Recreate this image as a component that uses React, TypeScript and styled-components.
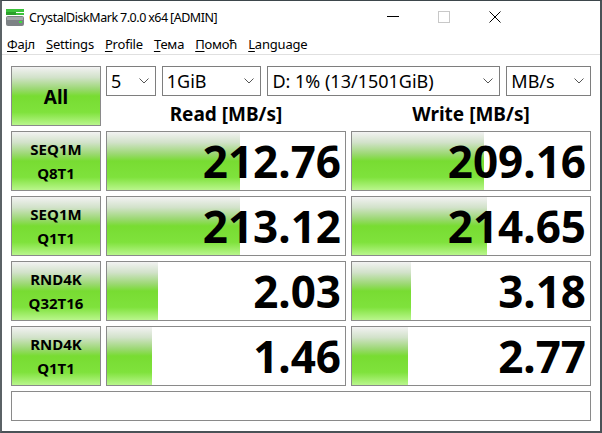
import React from "react";
import styled, { createGlobalStyle } from "styled-components";

const GlobalStyle = createGlobalStyle`
  html, body {
    margin: 0;
    padding: 0;
    background: #ffffff;
  }
  body {
    font-family: "Noto Sans", "Open Sans", sans-serif;
    color: #000;
  }
`;

const green = `linear-gradient(
  to bottom,
  #f2f2f2 0%,
  #d2e2ca 18%,
  #9bd872 38%,
  #78dc32 50%,
  #7fe23c 78%,
  #b9f68c 100%
)`;

const Window = styled.div`
  width: 602px;
  height: 433px;
  box-sizing: border-box;
  border-left: 2px solid #5b6266;
  border-right: 2px solid #4a5257;
  border-bottom: 2px solid #4a5257;
  border-top: 1px solid #3d464b;
  background: #fff;
  display: flex;
  flex-direction: column;
  overflow: hidden;
`;

const TitleBar = styled.div`
  height: 31px;
  display: flex;
  align-items: center;
  padding-left: 2px;
`;

const TitleText = styled.span`
  font-size: 12.5px;
  margin-left: 3px;
  letter-spacing: -0.45px;
  word-spacing: -0.5px;
  flex: 1;
  padding-top: 2px;
`;

const Controls = styled.div`
  display: flex;
  align-items: center;
  height: 100%;
  margin-right: 80px;
`;

const ControlButton = styled.div`
  width: 51px;
  height: 100%;
  display: flex;
  align-items: center;
  justify-content: center;
`;

const MenuBar = styled.div`
  height: 23px;
  display: flex;
  align-items: center;
  padding: 2px 0 0 5px;
  box-sizing: border-box;
  gap: 11px;
  border-bottom: 1px solid #e0e0e0;
`;

const MenuItem = styled.span`
  font-size: 13px;
  letter-spacing: -0.2px;
  u {
    text-decoration-thickness: 1px;
    text-underline-offset: 2px;
  }
`;

const Content = styled.div`
  flex: 1;
  padding: 11px 0 0 9px;
  display: grid;
  grid-template-columns: 90px 240px 240px;
  grid-template-rows: 60px 60px 60px 60px 60px 30px;
  column-gap: 5px;
  row-gap: 5px;
`;

const LabelButton = styled.div<{ $big?: boolean }>`
  box-sizing: border-box;
  border: 1px solid #8a8a8a;
  background: ${green};
  display: flex;
  flex-direction: column;
  align-items: center;
  justify-content: center;
  font-weight: 700;
  font-size: ${(p) => (p.$big ? "19px" : "15px")};
  line-height: ${(p) => (p.$big ? "20px" : "24px")};
  padding-top: ${(p) => (p.$big ? "2px" : "0")};
`;

const TopArea = styled.div`
  grid-column: 2 / span 2;
  display: grid;
  grid-template-columns: 240px 240px;
  grid-template-rows: 30px 30px;
  column-gap: 5px;
`;

const ComboRow = styled.div`
  grid-column: 1 / span 2;
  display: flex;
  gap: 6px;
`;

const Combo = styled.div<{ $w: number }>`
  width: ${(p) => p.$w}px;
  box-sizing: border-box;
  border: 1px solid #7e7e7e;
  background: #fff;
  display: flex;
  align-items: center;
  padding: 0 6px 0 4px;
  font-size: 18px;
  justify-content: space-between;
`;

const Header = styled.div`
  display: flex;
  align-items: center;
  justify-content: center;
  font-weight: 700;
  font-size: 19px;
  padding-top: 5px;
`;

const ResultBox = styled.div`
  position: relative;
  box-sizing: border-box;
  border: 1px solid #8a8a8a;
  background: #fff;
  display: flex;
  align-items: center;
  justify-content: flex-end;
  overflow: hidden;
`;

const Bar = styled.div`
  position: absolute;
  left: 0;
  top: 0;
  bottom: 0;
  background: ${green};
`;

const Value = styled.span`
  position: relative;
  font-weight: 700;
  font-size: 44px;
  line-height: 1;
  padding-right: 4px;
`;

const StatusBox = styled.div`
  grid-column: 1 / span 3;
  box-sizing: border-box;
  border: 1px solid #8a8a8a;
  background: #fff;
`;

const Chevron = () => (
  <svg width="10" height="6" viewBox="0 0 10 6">
    <polyline points="0.5,0.5 5,5 9.5,0.5" fill="none" stroke="#555" strokeWidth="1" />
  </svg>
);

const AppIcon = () => (
  <svg width="22" height="22" viewBox="0 0 22 22">
    <rect x="2" y="3" width="18" height="3" fill="#3cc23c" />
    <rect x="2" y="6" width="10" height="3" fill="#2aa02a" />
    <rect x="12" y="7" width="8" height="2" fill="#3cc23c" />
    <rect x="2" y="10" width="18" height="10" rx="2" fill="#7d8285" />
    <rect x="3" y="11" width="16" height="3" fill="#a4a8aa" />
    <rect x="15" y="15" width="3" height="2" fill="#3ce03c" />
  </svg>
);

const rows = [
  { l1: "SEQ1M", l2: "Q8T1", read: "212.76", write: "209.16", rw: 133, ww: 132 },
  { l1: "SEQ1M", l2: "Q1T1", read: "213.12", write: "214.65", rw: 133, ww: 135 },
  { l1: "RND4K", l2: "Q32T16", read: "2.03", write: "3.18", rw: 51, ww: 59 },
  { l1: "RND4K", l2: "Q1T1", read: "1.46", write: "2.77", rw: 45, ww: 56 },
];

const menus: [string, string][] = [
  ["Ф", "ајл"],
  ["S", "ettings"],
  ["P", "rofile"],
  ["Т", "ема"],
  ["П", "омоћ"],
  ["L", "anguage"],
];

export default function App() {
  return (
    <>
      <GlobalStyle />
      <Window>
        <TitleBar>
          <AppIcon />
          <TitleText>CrystalDiskMark 7.0.0 x64 [ADMIN]</TitleText>
          <Controls>
            <ControlButton>
              <svg width="12" height="2" viewBox="0 0 12 2">
                <rect width="12" height="1" fill="#000" />
              </svg>
            </ControlButton>
            <ControlButton>
              <svg width="12" height="12" viewBox="0 0 12 12">
                <rect x="0.5" y="0.5" width="11" height="11" fill="none" stroke="#c8c8c8" />
              </svg>
            </ControlButton>
            <ControlButton>
              <svg width="12" height="12" viewBox="0 0 12 12">
                <path d="M0.5 0.5 L11.5 11.5 M11.5 0.5 L0.5 11.5" stroke="#000" strokeWidth="1" />
              </svg>
            </ControlButton>
          </Controls>
        </TitleBar>
        <MenuBar>
          {menus.map(([a, b]) => (
            <MenuItem key={a + b}>
              <u>{a}</u>
              {b}
            </MenuItem>
          ))}
        </MenuBar>
        <Content>
          <LabelButton $big>All</LabelButton>
          <TopArea>
            <ComboRow>
              <Combo $w={50}>
                5 <Chevron />
              </Combo>
              <Combo $w={100}>
                1GiB <Chevron />
              </Combo>
              <Combo $w={234}>
                D: 1% (13/1501GiB) <Chevron />
              </Combo>
              <Combo $w={85}>
                MB/s <Chevron />
              </Combo>
            </ComboRow>
            <Header>Read [MB/s]</Header>
            <Header>Write [MB/s]</Header>
          </TopArea>
          {rows.map((r) => (
            <React.Fragment key={r.l1 + r.l2}>
              <LabelButton>
                <span>{r.l1}</span>
                <span>{r.l2}</span>
              </LabelButton>
              <ResultBox>
                <Bar style={{ width: r.rw }} />
                <Value>{r.read}</Value>
              </ResultBox>
              <ResultBox>
                <Bar style={{ width: r.ww }} />
                <Value>{r.write}</Value>
              </ResultBox>
            </React.Fragment>
          ))}
          <StatusBox />
        </Content>
      </Window>
    </>
  );
}
